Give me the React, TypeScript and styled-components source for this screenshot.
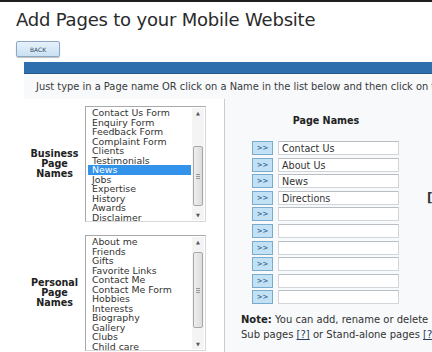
import React from 'react';
import styled, { createGlobalStyle } from 'styled-components';

const GlobalStyle = createGlobalStyle`
  html, body {
    margin: 0;
    padding: 0;
    background: #ffffff;
  }
  body {
    font-family: "DejaVu Sans", Verdana, sans-serif;
    color: #333;
  }
`;

const Page = styled.div`
  width: 432px;
  height: 352px;
  overflow: hidden;
  border-top: 2px solid #1e1e1e;
  box-sizing: border-box;
  background: #fff;
`;

const Title = styled.h1`
  margin: 6px 0 0 16px;
  font-size: 18px;
  line-height: 24px;
  letter-spacing: -0.2px;
  font-weight: normal;
  color: #2a2a2a;
  white-space: nowrap;
`;

const BackButton = styled.button`
  display: block;
  margin: 9px 0 0 16px;
  width: 44px;
  height: 16px;
  padding: 0;
  font-family: inherit;
  font-size: 6px;
  color: #3a4a5c;
  background: linear-gradient(#e6f2fb, #c9e1f4);
  border: 1px solid #8aa8c4;
  border-radius: 2px;
  box-shadow: 0 1px 1px rgba(0, 0, 0, 0.25);
`;

const Panel = styled.div`
  margin: 5px 0 0 24px;
  width: 600px;
  background: #f7f9fb;
`;

const PanelBar = styled.div`
  height: 11px;
  background: #306fae;
  border-bottom: 1px solid #24598d;
`;

const Intro = styled.div`
  padding: 7px 0 0 12px;
  height: 11px;
  font-size: 9.9px;
  line-height: 11px;
  color: #3a3a3a;
  white-space: nowrap;
`;

const Columns = styled.div`
  display: flex;
  margin-top: 7px;
`;

const LeftCol = styled.div`
  width: 200px;
  padding-top: 7px;
  display: flex;
  flex-direction: column;
  gap: 13px;
  background: #fff;
`;

const Group = styled.div`
  display: flex;
  align-items: center;
`;

const GroupLabel = styled.div`
  width: 61px;
  text-align: center;
  font-size: 9.6px;
  font-weight: bold;
  line-height: 10px;
  color: #222;
`;

const ListBox = styled.div`
  position: relative;
  width: 121px;
  height: 116px;
  box-sizing: border-box;
  padding: 1px 14px 0 2px;
  background: #fff;
  border: 1px solid #a9a9a9;
  border-right-color: #d8d8d8;
  border-bottom-color: #d8d8d8;
  overflow: hidden;
`;

const ListItem = styled.div<{ selected?: boolean }>`
  height: 9.5px;
  line-height: 9.5px;
  font-size: 9.4px;
  padding-left: 4px;
  white-space: nowrap;
  color: ${p => (p.selected ? '#fff' : '#333')};
  background: ${p => (p.selected ? '#3392ea' : 'transparent')};
`;

const Scroll = styled.div`
  position: absolute;
  top: 1px;
  right: 1px;
  bottom: 1px;
  width: 12px;
  display: flex;
  flex-direction: column;
  background: #f4f4f4;
`;

const Arrow = styled.div`
  height: 10px;
  font-size: 5px;
  line-height: 10px;
  text-align: center;
  color: #555;
`;

const Track = styled.div`
  flex: 1;
  position: relative;
`;

const Thumb = styled.div`
  position: absolute;
  left: 1px;
  right: 1px;
  border: 1px solid #a8a8a8;
  border-radius: 2px;
  background: linear-gradient(90deg, #eee, #dcdcdc);
  display: flex;
  align-items: center;
  justify-content: center;

  &::after {
    content: '';
    width: 4px;
    height: 5px;
    background: repeating-linear-gradient(#999 0 1px, transparent 1px 2px);
  }
`;

const RightCol = styled.div`
  width: 300px;
  min-height: 260px;
  border-left: 1px solid #c9ccd0;
  padding-left: 16px;
`;

const ColTitle = styled.div`
  width: 148px;
  margin: 16px 0 0 11px;
  text-align: center;
  font-size: 9.6px;
  font-weight: bold;
  line-height: 11px;
  color: #222;
`;

const Rows = styled.div`
  margin: 15px 0 0 11px;
  display: flex;
  flex-direction: column;
  gap: 2.6px;
`;

const Row = styled.div`
  display: flex;
  align-items: center;
  height: 14px;
`;

const AddButton = styled.div`
  width: 19px;
  height: 12px;
  margin-right: 5px;
  background: #c3e1f4;
  border: 1px solid #79abcf;
  font-size: 7px;
  line-height: 12px;
  text-align: center;
  color: #3b6d99;
  font-weight: bold;
`;

const NameInput = styled.div`
  width: 121px;
  height: 14px;
  box-sizing: border-box;
  padding-left: 3px;
  background: #fff;
  border: 1px solid #d0d5da;
  border-top-color: #b9bec4;
  font-size: 9.6px;
  line-height: 13px;
  color: #333;
  white-space: nowrap;
`;

const Help = styled.span`
  margin-left: 28px;
  font-size: 12px;
  font-weight: bold;
  color: #333;
`;

const Note = styled.div`
  margin-top: 8px;
  font-size: 10px;
  line-height: 15px;
  color: #333;
  white-space: nowrap;

  b {
    color: #222;
  }
  a {
    color: #2d3f5e;
    text-decoration: underline;
  }
`;

type ListProps = { items: string[]; selected?: string; thumbTop: number; thumbHeight: number };

const PageList: React.FC<ListProps> = ({ items, selected, thumbTop, thumbHeight }) => (
  <ListBox>
    {items.map(item => (
      <ListItem key={item} selected={item === selected}>
        {item}
      </ListItem>
    ))}
    <Scroll>
      <Arrow>▲</Arrow>
      <Track>
        <Thumb style={{ top: thumbTop, height: thumbHeight }} />
      </Track>
      <Arrow>▼</Arrow>
    </Scroll>
  </ListBox>
);

const businessPages = [
  'Contact Us Form',
  'Enquiry Form',
  'Feedback Form',
  'Complaint Form',
  'Clients',
  'Testimonials',
  'News',
  'Jobs',
  'Expertise',
  'History',
  'Awards',
  'Disclaimer',
];

const personalPages = [
  'About me',
  'Friends',
  'Gifts',
  'Favorite Links',
  'Contact Me',
  'Contact Me Form',
  'Hobbies',
  'Interests',
  'Biography',
  'Gallery',
  'Clubs',
  'Child care',
];

const pageNames = ['Contact Us', 'About Us', 'News', 'Directions', '', '', '', '', '', ''];

const App: React.FC = () => (
  <>
    <GlobalStyle />
    <Page>
      <Title>Add Pages to your Mobile Website</Title>
      <BackButton>BACK</BackButton>
      <Panel>
        <PanelBar />
        <Intro>
          Just type in a Page name OR click on a Name in the list below and then click on the
        </Intro>
        <Columns>
          <LeftCol>
            <Group>
              <GroupLabel>
                Business
                <br />
                Page
                <br />
                Names
              </GroupLabel>
              <PageList items={businessPages} selected="News" thumbTop={28} thumbHeight={58} />
            </Group>
            <Group>
              <GroupLabel>
                Personal
                <br />
                Page
                <br />
                Names
              </GroupLabel>
              <PageList items={personalPages} thumbTop={5} thumbHeight={74} />
            </Group>
          </LeftCol>
          <RightCol>
            <ColTitle>Page Names</ColTitle>
            <Rows>
              {pageNames.map((name, i) => (
                <Row key={i}>
                  <AddButton>&gt;&gt;</AddButton>
                  <NameInput>{name}</NameInput>
                  {i === 3 && <Help>[?]</Help>}
                </Row>
              ))}
            </Rows>
            <Note>
              <b>Note:</b> You can add, rename or delete Menu pages later.
              <br />
              Sub pages <a>[?]</a> or Stand-alone pages <a>[?]</a>
            </Note>
          </RightCol>
        </Columns>
      </Panel>
    </Page>
  </>
);

export default App;
